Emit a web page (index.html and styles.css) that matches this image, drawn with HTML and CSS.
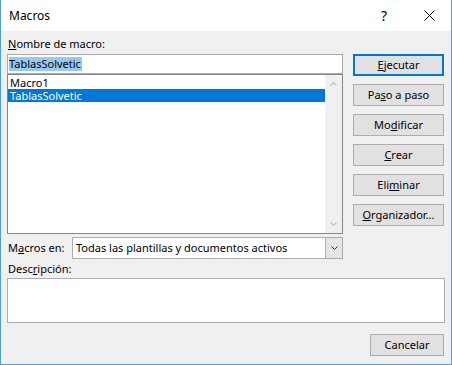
FILE: index.html
```html
<!DOCTYPE html>
<html>
<head>
<meta charset="utf-8">
<link rel="stylesheet" href="styles.css">
</head>
<body>
<div class="window">
  <div class="titlebar">
    <span class="title">Macros</span>
    <span class="help">?</span>
    <span class="close"><svg width="11" height="11" viewBox="0 0 11 11"><path d="M0.5 0.5L10.5 10.5M10.5 0.5L0.5 10.5" stroke="#000" stroke-width="1"/></svg></span>
  </div>
  <div class="content">
    <div class="top">
      <div class="left">
        <div class="label"><u>N</u>ombre de macro:</div>
        <div class="input"><span class="sel">TablasSolvetic</span></div>
        <div class="list">
          <div class="items">
            <div class="item">Macro1</div>
            <div class="item selected">TablasSolvetic</div>
          </div>
          <div class="scrollbar">
            <div class="arrow"><svg width="7" height="5" viewBox="0 0 7 5"><path d="M0.5 4.5L3.5 1.5L6.5 4.5" fill="none" stroke="#c0c0c0" stroke-width="1.2"/></svg></div>
            <div class="arrow"><svg width="7" height="5" viewBox="0 0 7 5"><path d="M0.5 0.5L3.5 3.5L6.5 0.5" fill="none" stroke="#c0c0c0" stroke-width="1.2"/></svg></div>
          </div>
        </div>
        <div class="combo-row">
          <span class="combo-label">M<u>a</u>cros en:</span>
          <div class="combo">
            <span class="combo-text">Todas las plantillas y documentos activos</span>
            <span class="combo-btn"><svg width="7" height="5" viewBox="0 0 7 5"><path d="M0.5 0.5L3.5 3.5L6.5 0.5" fill="none" stroke="#333" stroke-width="1"/></svg></span>
          </div>
        </div>
      </div>
      <div class="right">
        <button class="btn default"><u>E</u>jecutar</button>
        <button class="btn">Pa<u>s</u>o a paso</button>
        <button class="btn">Mo<u>d</u>ificar</button>
        <button class="btn"><u>C</u>rear</button>
        <button class="btn">Eli<u>m</u>inar</button>
        <button class="btn"><u>O</u>rganizador...</button>
      </div>
    </div>
    <div class="label desc-label">Desc<u>r</u>ipción:</div>
    <div class="desc"></div>
    <div class="footer"><button class="btn cancel">Cancelar</button></div>
  </div>
</div>
</body>
</html>
```
FILE: styles.css
```css
* { box-sizing: border-box; }
html, body { margin: 0; padding: 0; }
body {
  font-family: "Noto Sans", "Open Sans", sans-serif;
  font-size: 11px;
  color: #000;
  background: #f0f0f0;
}
u { text-decoration: underline; text-underline-offset: 1px; }
.window {
  width: 452px;
  height: 365px;
  background: #f0f0f0;
  border-left: 1px solid #4aa0e8;
  border-right: 1px solid #4aa0e8;
  border-bottom: 1px solid #4aa0e8;
}
.titlebar {
  height: 31px;
  background: #fff;
  display: flex;
  align-items: center;
  padding-left: 8px;
  padding-right: 16px;
  font-size: 12px;
}
.title { flex: 1; line-height: 16px; }
.help {
  width: 10px;
  text-align: center;
  font-size: 14px;
  line-height: 16px;
  margin-right: 35px;
}
.close { display: flex; }
.content {
  padding: 5px 6px 0 6px;
}
.top { display: flex; gap: 10px; }
.left { width: 336px; }
.right {
  width: 91px;
  padding-top: 18px;
  display: flex;
  flex-direction: column;
  gap: 8px;
}
.label { line-height: 16px; padding-left: 1px; }
.left > .label { margin-bottom: 2px; }
.input {
  height: 20px;
  background: #fff;
  border: 1px solid #a9a9a9;
  padding: 2px 0 0 1px;
  line-height: 14px;
}
.sel { display: inline-block; background: #99c9ef; line-height: 14px; padding-right: 1px; }
.list {
  height: 160px;
  background: #fff;
  border: 1px solid #828790;
  display: flex;
}
.items { flex: 1; padding-top: 1px; }
.item { line-height: 13px; padding-left: 2px; }
.item.selected { background: #0078d7; color: #fff; }
.scrollbar {
  width: 17px;
  background: #f0f0f0;
  display: flex;
  flex-direction: column;
  justify-content: space-between;
}
.arrow { height: 17px; display: flex; align-items: center; justify-content: center; }
.combo-row {
  margin-top: 3px;
  height: 22px;
  display: flex;
  align-items: center;
}
.combo-label { width: 65px; padding-left: 1px; line-height: 16px; }
.combo {
  flex: 1;
  height: 22px;
  background: #fff;
  border: 1px solid #acacac;
  display: flex;
  align-items: center;
}
.combo-text { flex: 1; padding-left: 3px; line-height: 16px; }
.combo-btn {
  width: 17px;
  height: 20px;
  background: #e5e5e5;
  border-left: 1px solid #acacac;
  display: flex;
  align-items: center;
  justify-content: center;
}
.btn {
  font-family: inherit;
  font-size: 11px;
  color: #000;
  height: 22px;
  width: 91px;
  padding: 0;
  background: #e1e1e1;
  border: 1px solid #adadad;
  line-height: 16px;
}
.btn.default { border: 2px solid #0078d7; }
.desc-label { margin-top: 2px; }
.desc {
  margin-top: 1px;
  height: 45px;
  background: #fff;
  border: 1px solid #abadb3;
}
.footer {
  display: flex;
  justify-content: flex-end;
  margin-top: 11px;
  padding-right: 1px;
}
.btn.cancel { width: 74px; }
```
